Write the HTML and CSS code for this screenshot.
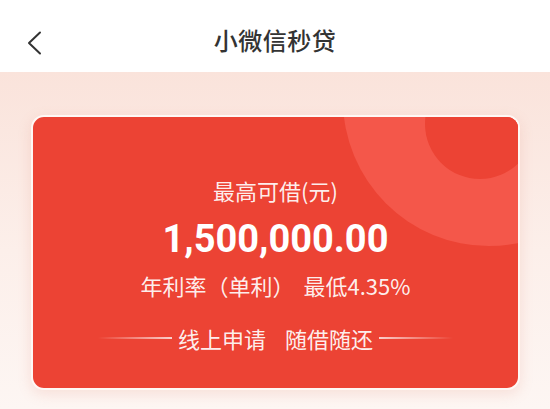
FILE: index.html
```html
<!DOCTYPE html>
<html lang="zh-CN">
<head>
<meta charset="utf-8">
<title>小微信秒贷</title>
<link rel="stylesheet" href="styles.css">
</head>
<body>
<header class="nav">
  <div class="nav-left">
    <svg class="back" width="16" height="24" viewBox="0 0 16 24"><path d="M14 1.5 L3 12 L14 22.5" fill="none" stroke="#333" stroke-width="2" stroke-linecap="round" stroke-linejoin="round"/></svg>
  </div>
  <h1 class="title">小微信秒贷</h1>
  <div class="nav-right"></div>
</header>
<main class="content">
  <section class="card">
    <div class="deco deco-outer"></div>
    <div class="deco deco-inner"></div>
    <div class="card-body">
      <div class="label">最高可借(元)</div>
      <div class="amount">1,500,000.00</div>
      <div class="rate">年利率（单利）<span class="rate-gap"></span>最低4.35%</div>
      <div class="slogan">
        <span class="line line-left"></span>
        <span class="slogan-text">线上申请<span class="gap"></span>随借随还</span>
        <span class="line line-right"></span>
      </div>
    </div>
  </section>
</main>
</body>
</html>
```
FILE: styles.css
```css
* { box-sizing: border-box; }
html, body { margin: 0; padding: 0; }
body {
  width: 550px;
  height: 409px;
  overflow: hidden;
  font-family: "Noto Sans CJK SC", "Noto Sans", sans-serif;
  background: linear-gradient(180deg, #fae3db 72px, #fcefea 250px, #fdf6f3 409px);
}
.nav {
  height: 72px;
  padding-top: 6px;
  background: #ffffff;
  display: grid;
  grid-template-columns: 80px 1fr 80px;
  align-items: center;
}
.nav-left { padding-left: 26px; padding-top: 8px; display: flex; align-items: center; }
.title {
  margin: 0;
  text-align: center;
  font-size: 24px;
  font-weight: 500;
  color: #333333;
  letter-spacing: 0.5px;
}
.content { padding: 43px 30px 0 31px; }
.card {
  position: relative;
  height: 275px;
  border: 2px solid #fff8f5;
  border-radius: 13px;
  background: #ec4334;
  overflow: hidden;
  box-shadow: 0 4px 14px rgba(220, 120, 100, 0.18);
}
.deco { position: absolute; border-radius: 50%; }
.deco-outer {
  width: 292px; height: 292px;
  left: 310px; top: -163px;
  background: #f4574a;
}
.deco-inner {
  width: 110px; height: 110px;
  left: 392px; top: -48px;
  background: #ec4334;
}
.card-body {
  position: relative;
  display: flex;
  flex-direction: column;
  align-items: center;
  color: #ffffff;
  padding-top: 58px;
}
.label {
  font-size: 22px;
  line-height: 30px;
  color: rgba(255,255,255,0.92);
}
.amount {
  font-family: Roboto, "Noto Sans", sans-serif;
  font-weight: 700;
  font-size: 38px;
  line-height: 46px;
  margin-top: 11px;
}
.rate {
  display: flex;
  align-items: center;
  font-size: 22px;
  line-height: 28px;
  margin-top: 9px;
  color: rgba(255,255,255,0.93);
}
.rate-gap { display: inline-block; width: 9px; }
.slogan {
  margin-top: 25px;
  display: flex;
  align-items: center;
  gap: 6px;
  font-size: 22px;
  line-height: 28px;
  color: rgba(255,255,255,0.93);
}
.slogan-text { display: flex; align-items: center; }
.gap { display: inline-block; width: 19px; }
.line { display: block; width: 74px; height: 1.5px; }
.line-left { background: linear-gradient(90deg, rgba(255,255,255,0), rgba(255,255,255,0.75)); }
.line-right { background: linear-gradient(90deg, rgba(255,255,255,0.75), rgba(255,255,255,0)); }
```
